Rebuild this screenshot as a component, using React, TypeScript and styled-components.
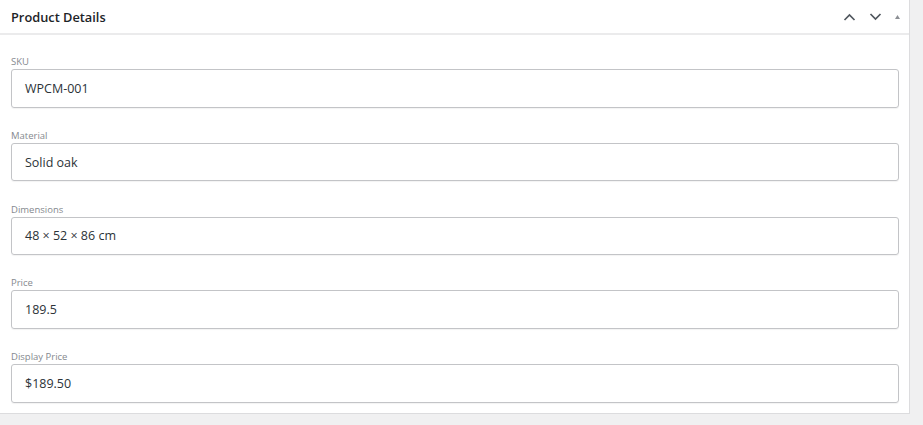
import React from "react";
import styled, { createGlobalStyle } from "styled-components";

const GlobalStyle = createGlobalStyle`
  body {
    margin: 0;
    background: #f0f0f1;
    font-family: "Open Sans", "Noto Sans", sans-serif;
    color: #2c3338;
  }
`;

const Panel = styled.section`
  width: 910px;
  box-sizing: border-box;
  background: #fff;
  border-right: 1px solid #dcdcde;
  border-bottom: 1px solid #dcdcde;
`;

const Header = styled.div`
  height: 35px;
  box-sizing: border-box;
  display: flex;
  align-items: center;
  justify-content: space-between;
  padding: 0 9px 0 11px;
  border-bottom: 2px solid #ebebec;
`;

const Title = styled.h2`
  margin: 0;
  font-size: 12.8px;
  font-weight: 600;
  color: #1d2327;
`;

const Actions = styled.div`
  display: flex;
  align-items: center;
  gap: 13px;
`;

const IconButton = styled.span`
  display: flex;
  align-items: center;
  justify-content: center;
  color: #50575e;
`;

const Body = styled.div`
  padding: 20px 10px 10px 11px;
  display: flex;
  flex-direction: column;
  gap: 21.25px;
`;

const Field = styled.div`
  display: flex;
  flex-direction: column;
`;

const Label = styled.label`
  font-size: 9.5px;
  line-height: 14px;
  color: #85898e;
`;

const Input = styled.div`
  height: 38.5px;
  box-sizing: border-box;
  border: 1px solid #c3c4c7;
  border-radius: 3px;
  display: flex;
  align-items: center;
  padding: 0 13px;
  font-size: 12.5px;
  color: #2c3338;
  box-shadow: 0 1px 1px rgba(0, 0, 0, 0.05);
`;

const fields = [
  { label: "SKU", value: "WPCM-001" },
  { label: "Material", value: "Solid oak" },
  { label: "Dimensions", value: "48 × 52 × 86 cm" },
  { label: "Price", value: "189.5" },
  { label: "Display Price", value: "$189.50" },
];

const Chevron = ({ up }: { up?: boolean }) => (
  <svg width="13" height="8" viewBox="0 0 13 8" fill="none">
    <path
      d={up ? "M1.5 7 L6.5 2 L11.5 7" : "M1.5 1 L6.5 6 L11.5 1"}
      stroke="currentColor"
      strokeWidth="1.7"
    />
  </svg>
);

const Caret = () => (
  <svg width="5" height="4" viewBox="0 0 5 4">
    <path d="M0 4 L2.5 0 L5 4 Z" fill="#8c8f94" />
  </svg>
);

export default function App() {
  return (
    <>
      <GlobalStyle />
      <Panel>
        <Header>
          <Title>Product Details</Title>
          <Actions>
            <IconButton>
              <Chevron up />
            </IconButton>
            <IconButton>
              <Chevron />
            </IconButton>
            <IconButton>
              <Caret />
            </IconButton>
          </Actions>
        </Header>
        <Body>
          {fields.map((f) => (
            <Field key={f.label}>
              <Label>{f.label}</Label>
              <Input>{f.value}</Input>
            </Field>
          ))}
        </Body>
      </Panel>
    </>
  );
}
